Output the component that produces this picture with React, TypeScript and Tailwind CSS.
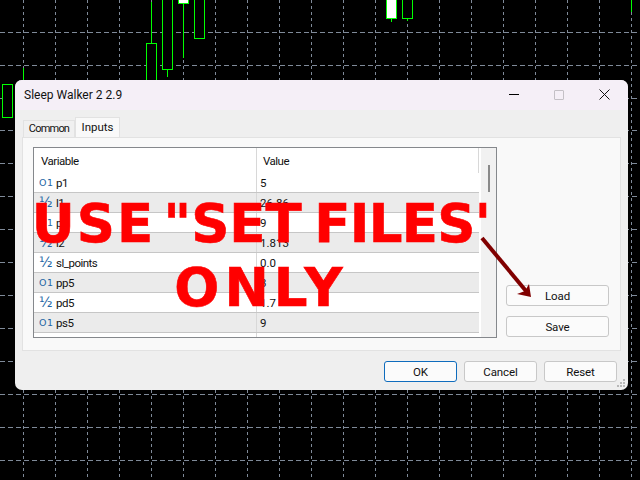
const gridX = Array.from({ length: 20 }, (_, i) => 23.5 + i * 32)
const gridY = [32.5, 65.5, 98.5, 130.5, 163.5, 196.5, 229.5, 262.5, 295.5, 328.5, 361.5, 394.5, 427.5, 460.5]

const rows = [
  { type: "int", name: "p1", value: "5" },
  { type: "dbl", name: "l1", value: "26.86" },
  { type: "int", name: "p2", value: "9" },
  { type: "dbl", name: "l2", value: "1.813" },
  { type: "dbl", name: "sl_points", value: "0.0" },
  { type: "int", name: "pp5", value: "3" },
  { type: "dbl", name: "pd5", value: "1.7" },
  { type: "int", name: "ps5", value: "9" },
]

function Chart() {
  return (
    <svg className="absolute inset-0" width="640" height="480">
      {gridX.map((x) => (
        <line key={x} x1={x} x2={x} y1="0" y2="480" stroke="#7f8a99" strokeDasharray="3 3" />
      ))}
      {gridY.map((y) => (
        <line key={y} x1="0" x2="640" y1={y} y2={y} stroke="#7f8a99" strokeDasharray="5 3" />
      ))}
      <g stroke="#00ff00" fill="#000">
        <line x1="23.5" x2="23.5" y1="68" y2="82" />
        <rect x="2.5" y="84.5" width="10" height="33" />
        <line x1="151.5" x2="151.5" y1="2" y2="43" />
        <rect x="146.5" y="43.5" width="10" height="40" />
        <line x1="167.5" x2="167.5" y1="69" y2="77" />
        <rect x="162.5" y="-2" width="10" height="71.5" />
        <line x1="183.5" x2="183.5" y1="3" y2="58" />
        <rect x="178.5" y="-2" width="10" height="5.5" fill="#fff" />
        <rect x="194.5" y="-2" width="10" height="40.5" />
        <line x1="391.5" x2="391.5" y1="18" y2="22" />
        <rect x="386.5" y="-2" width="10" height="20.5" fill="#fff" />
        <line x1="407.5" x2="407.5" y1="18" y2="21" />
        <rect x="402.5" y="-2" width="10" height="20.5" />
        <line x1="631.5" x2="631.5" y1="0" y2="12" />
      </g>
    </svg>
  )
}

function DialogButton({ label, className }: { label: string; className: string }) {
  return (
    <button className={`h-[21px] rounded-[3px] bg-[#fbfbfb] border text-[11.5px] leading-[21px] tracking-[-0.1px] text-[#111] ${className}`}>
      {label}
    </button>
  )
}

function TypeIcon({ type }: { type: string }) {
  return (
    <span className="w-[17px] shrink-0 text-[#1f66a5] leading-none font-['DejaVu_Sans',sans-serif]">
      {type === "int" ? <span className="text-[9.5px] tracking-[0.5px]">O1</span> : <span className="text-[14px]">½</span>}
    </span>
  )
}

function ParamTable() {
  return (
    <div className="w-[464px] h-[191px] border border-[#85888c] bg-white flex overflow-hidden tracking-[-0.5px]">
      <div className="w-[445px] shrink-0">
        <div className="flex h-[25px] items-center">
          <div className="w-[223px] pl-[7px] pt-[2px] h-full flex items-center border-r border-[#d8d8d8]">Variable</div>
          <div className="flex-1 pl-[6px] pt-[2px] h-full flex items-center border-r border-[#d8d8d8]">Value</div>
        </div>
        {rows.map((row, i) => (
          <div key={row.name} className={`flex h-[20px] items-center border-b border-[#c6c6c6] ${i % 2 ? "bg-[#ebebeb]" : "bg-white"}`}>
            <div className="w-[223px] pl-[5px] h-full flex items-center border-r border-[#d8d8d8]">
              <TypeIcon type={row.type} />
              <span className="pt-[2px]">{row.name}</span>
            </div>
            <div className="pl-[3px] pt-[2px] tracking-normal">{row.value}</div>
          </div>
        ))}
        <div className="h-[6px] w-[223px] border-r border-[#d8d8d8]" />
      </div>
      <div className="flex-1 bg-[#f1f1f1] ml-[2px] pt-[17px] pl-[7px]">
        <div className="w-[2px] h-[27px] bg-[#8a8a8a]" />
      </div>
    </div>
  )
}

function Dialog() {
  return (
    <div className="absolute left-[15px] top-[80px] w-[613px] h-[310px] rounded-[7px] overflow-hidden bg-[#efefef] text-[11.5px] text-[#111] font-['Roboto',sans-serif]">
      <div className="h-[30px] bg-[#f5eff7] flex items-center pl-[9px] pb-[1px]">
        <span className="text-[12px]">Sleep Walker 2 2.9</span>
        <div className="ml-auto flex items-center mr-[18px] gap-[35px]">
          <div className="w-[10px] h-[1px] bg-black" />
          <div className="w-[10px] h-[10px] border border-[#c4c0c6] rounded-[1px]" />
          <svg width="11" height="11" viewBox="0 0 11 11" stroke="#111">
            <path d="M0.5 0.5 10.5 10.5M10.5 0.5 0.5 10.5" />
          </svg>
        </div>
      </div>
      <div className="flex items-end h-[27px] pl-[8px]">
        <div className="h-[17px] w-[52px] pt-[1px] flex items-center justify-center border border-b-0 border-[#e2e2e2] bg-[#f0f0f0] text-[11px] tracking-[-0.8px]">Common</div>
        <div className="h-[20px] w-[45px] flex items-center justify-center border border-b-0 border-[#e2e2e2] bg-[#f9f9f9]">Inputs</div>
      </div>
      <div className="ml-[7px] w-[599px] h-[214px] border border-[#e2e2e2] bg-[#f9f9f9] pl-[10px] pt-[9px] flex">
        <ParamTable />
        <div className="ml-[9px] flex flex-col gap-[10px] pt-[138px]">
          <DialogButton label="Load" className="w-[103px] border-[#c8c8c8]" />
          <DialogButton label="Save" className="w-[103px] border-[#c8c8c8]" />
        </div>
      </div>
      <div className="flex justify-end gap-[7px] pr-[11px] pt-[10px]">
        <DialogButton label="OK" className="w-[73px] border-[#0f6cbd]" />
        <DialogButton label="Cancel" className="w-[73px] border-[#c8c8c8]" />
        <DialogButton label="Reset" className="w-[73px] border-[#c8c8c8]" />
      </div>
      <svg className="absolute right-[2px] bottom-[2px]" width="10" height="10" fill="#b8b8b8">
        <rect x="7" y="1" width="2" height="2" />
        <rect x="4" y="4" width="2" height="2" />
        <rect x="7" y="4" width="2" height="2" />
        <rect x="1" y="7" width="2" height="2" />
        <rect x="4" y="7" width="2" height="2" />
        <rect x="7" y="7" width="2" height="2" />
      </svg>
    </div>
  )
}

export default function App() {
  return (
    <div className="relative w-[640px] h-[480px] bg-black overflow-hidden">
      <Chart />
      <Dialog />
      <div className="absolute left-0 top-[192px] w-[522px] text-center text-[#ff0000] font-bold text-[53px] leading-[64px] font-['DejaVu_Sans',sans-serif] whitespace-nowrap [-webkit-text-stroke:0.6px_#ff0000]">
        <div className="[word-spacing:-8px]">
          <span className="tracking-[2px]">USE</span> <span className="ml-[-2px]">"SET</span>{" "}
          <span className="ml-[2px] tracking-[-0.7px]">FILES'</span>
        </div>
        <div className="tracking-[5px]">ONLY</div>
      </div>
      <svg className="absolute inset-0" width="640" height="480">
        <line x1="482" y1="238" x2="526" y2="291" stroke="#800000" strokeWidth="4" />
        <path d="M531 297 L517 294 L525 291 L529 284 Z" fill="#800000" />
      </svg>
    </div>
  )
}
